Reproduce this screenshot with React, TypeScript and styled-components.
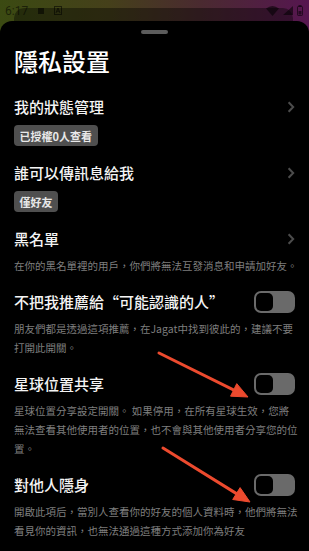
import React from 'react';
import styled, { createGlobalStyle } from 'styled-components';

const GlobalStyle = createGlobalStyle`
  html, body {
    margin: 0;
    padding: 0;
    background: #000;
  }
  body {
    font-family: 'Noto Sans CJK TC', 'Noto Sans', sans-serif;
    -webkit-font-smoothing: antialiased;
  }
`;

/** 整個畫面 */
const Screen = styled.div`
  position: relative;
  width: 309px;
  height: 551px;
  overflow: hidden;
  display: flex;
  flex-direction: column;
  background: linear-gradient(90deg, #3b4a12 0%, #45401a 35%, #4a2a30 65%, #561650 100%);
`;

/** 狀態列 */
const StatusBar = styled.div`
  position: relative;
  height: 21px;
  flex-shrink: 0;
  display: flex;
  align-items: center;
  justify-content: space-between;
  padding: 0 6px 0 5px;
  color: rgba(0, 0, 0, 0.55);
  font-family: Roboto, 'Noto Sans', sans-serif;
  font-size: 12px;
`;

/** 後面那一層被遮住的面板 */
const BackSheet = styled.div`
  position: absolute;
  left: 14px;
  right: 16px;
  top: 8px;
  bottom: 0;
  border-radius: 10px 10px 0 0;
  background: rgba(0, 0, 0, 0.38);
`;

const StatusGroup = styled.div<{ $gap: number }>`
  position: relative;
  display: flex;
  align-items: center;
  gap: ${(p) => p.$gap}px;
`;

/** 底部彈出面板 */
const Sheet = styled.div`
  flex: 1;
  display: flex;
  flex-direction: column;
  background: #000;
  border-radius: 12px 12px 0 0;
  padding: 9px 14px 0 14px;
`;

const Handle = styled.div`
  align-self: center;
  width: 27px;
  height: 4px;
  border-radius: 2px;
  background: #5c5c5c;
`;

const Title = styled.h1`
  margin: 11px 0 0 0;
  font-size: 24px;
  line-height: 32px;
  font-weight: 500;
  color: #fff;
`;

const List = styled.div`
  margin-top: 19px;
  display: flex;
  flex-direction: column;
  gap: 16px;
`;

const Section = styled.div<{ $gap: number }>`
  display: flex;
  flex-direction: column;
  align-items: flex-start;
  gap: ${(p) => p.$gap}px;
`;

const Row = styled.div`
  align-self: stretch;
  height: 22px;
  display: flex;
  align-items: center;
  justify-content: space-between;
`;

const RowLabel = styled.span`
  font-size: 15px;
  line-height: 22px;
  font-weight: 500;
  color: #f4f4f4;
`;

const Chip = styled.span`
  height: 21px;
  display: inline-flex;
  align-items: center;
  padding: 0 5.5px;
  border-radius: 4px;
  background: #4f4f4f;
  color: #e8e8e8;
  font-size: 11px;
  font-weight: 700;
`;

const Desc = styled.div`
  font-size: 10.5px;
  line-height: 19px;
  color: #7e7e7e;
  white-space: nowrap;
`;

const Track = styled.div<{ $on: boolean }>`
  width: 41px;
  height: 22px;
  box-sizing: border-box;
  padding: 2px;
  border-radius: 7px;
  background: ${(p) => (p.$on ? '#3a7bff' : '#6a6a6a')};
  display: flex;
  justify-content: ${(p) => (p.$on ? 'flex-end' : 'flex-start')};
`;

const Thumb = styled.div`
  width: 17px;
  height: 18px;
  border-radius: 5px;
  background: #000;
`;

const Overlay = styled.svg`
  position: absolute;
  left: 0;
  top: 0;
  pointer-events: none;
`;

const Chevron = () => (
  <svg width="8" height="12" viewBox="0 0 8 12">
    <path d="M1.6 1.2 L6.2 6 L1.6 10.8" fill="none" stroke="#4c4c4c" strokeWidth="2" />
  </svg>
);

const Toggle = ({ on }: { on: boolean }) => (
  <Track $on={on}>
    <Thumb />
  </Track>
);

type Item =
  | { kind: 'link'; label: string; chip?: string; lines?: string[] }
  | { kind: 'switch'; label: string; on: boolean; lines: string[] };

const ITEMS: Item[] = [
  { kind: 'link', label: '我的狀態管理', chip: '已授權0人查看' },
  { kind: 'link', label: '誰可以傳訊息給我', chip: '僅好友' },
  { kind: 'link', label: '黑名單', lines: ['在你的黑名單裡的用戶，你們將無法互發消息和申請加好友。'] },
  {
    kind: 'switch',
    label: '不把我推薦給“可能認識的人”',
    on: false,
    lines: ['朋友們都是透過這項推薦，在Jagat中找到彼此的，建議不要', '打開此開關。'],
  },
  {
    kind: 'switch',
    label: '星球位置共享',
    on: false,
    lines: [
      '星球位置分享設定開關。 如果停用，在所有星球生效，您將',
      '無法查看其他使用者的位置，也不會與其他使用者分享您的位',
      '置。',
    ],
  },
  {
    kind: 'switch',
    label: '對他人隱身',
    on: false,
    lines: ['開啟此項后，當別人查看你的好友的個人資料時，他們將無法', '看見你的資訊，也無法通過這種方式添加你為好友'],
  },
];

const Arrow = ({ x1, y1, x2, y2 }: { x1: number; y1: number; x2: number; y2: number }) => {
  const dx = x2 - x1;
  const dy = y2 - y1;
  const len = Math.hypot(dx, dy);
  const ux = dx / len;
  const uy = dy / len;
  const bx = x2 - ux * 16;
  const by = y2 - uy * 16;
  const px = -uy * 7;
  const py = ux * 7;
  return (
    <g fill="#ec4a2e" stroke="#ec4a2e">
      <line x1={x1} y1={y1} x2={bx + ux * 2} y2={by + uy * 2} strokeWidth="3" strokeLinecap="round" />
      <polygon points={`${x2},${y2} ${bx + px},${by + py} ${bx - px},${by - py}`} strokeWidth="1" strokeLinejoin="round" />
    </g>
  );
};

export default function App() {
  return (
    <>
      <GlobalStyle />
      <Screen>
        <StatusBar>
          <BackSheet />
          <StatusGroup $gap={10}>
            <span>6:17</span>
            <svg width="6" height="6" viewBox="0 0 6 6">
              <rect width="6" height="6" fill="currentColor" />
            </svg>
            <svg width="8" height="9" viewBox="0 0 8 9">
              <rect x="0.5" y="0.5" width="7" height="8" fill="none" stroke="currentColor" />
              <path d="M2 7 L4 2 L6 7 M2.8 5.2 H5.2" fill="none" stroke="currentColor" strokeWidth="1" />
            </svg>
          </StatusGroup>
          <StatusGroup $gap={4}>
            <svg width="13" height="10" viewBox="0 0 13 10">
              <path d="M0 2.5 Q6.5 -2.5 13 2.5 L6.5 10 Z" fill="currentColor" />
            </svg>
            <svg width="10" height="9" viewBox="0 0 10 9">
              <path d="M10 0 V9 H0 Z" fill="currentColor" />
            </svg>
            <svg width="6" height="11" viewBox="0 0 6 11">
              <rect x="1.5" y="0" width="3" height="1.5" fill="currentColor" />
              <rect x="0.5" y="1.5" width="5" height="9" rx="0.8" fill="none" stroke="currentColor" />
              <rect x="1.5" y="6" width="3" height="3.5" fill="currentColor" />
            </svg>
          </StatusGroup>
        </StatusBar>
        <Sheet>
          <Handle />
          <Title>隱私設置</Title>
          <List>
            {ITEMS.map((item) => (
              <Section key={item.label} $gap={item.lines ? 6 : 7}>
                <Row>
                  <RowLabel>{item.label}</RowLabel>
                  {item.kind === 'link' ? <Chevron /> : <Toggle on={item.on} />}
                </Row>
                {item.kind === 'link' && item.chip && <Chip>{item.chip}</Chip>}
                {item.lines && (
                  <div>
                    {item.lines.map((line) => (
                      <Desc key={line}>{line}</Desc>
                    ))}
                  </div>
                )}
              </Section>
            ))}
          </List>
        </Sheet>
        <Overlay width="309" height="551" viewBox="0 0 309 551">
          <Arrow x1={159} y1={353} x2={248} y2={397} />
          <Arrow x1={163} y1={448} x2={250} y2={502} />
        </Overlay>
      </Screen>
    </>
  );
}
